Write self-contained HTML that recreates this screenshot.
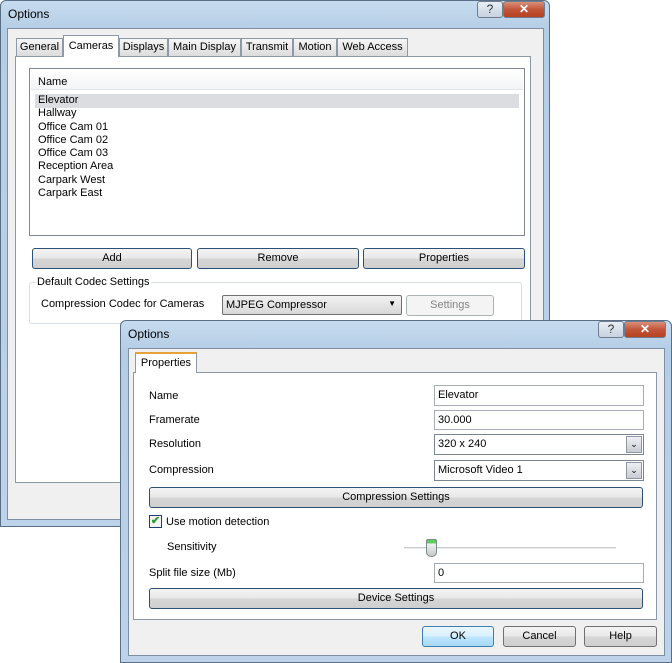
<!DOCTYPE html>
<html><head><meta charset="utf-8"><style>
*{box-sizing:border-box;margin:0;padding:0}
body{width:672px;height:663px;background:#fff;position:relative;overflow:hidden;font-family:"Liberation Sans",sans-serif;font-size:11px;color:#000}
.a{position:absolute}
.win{position:absolute;border:1px solid #5a6f86;border-radius:6px 6px 0 0;background:linear-gradient(180deg,#c6dbee 0,#b4cde6 30px,#bcd3ea 100%)}
.inner{position:absolute;background:#f0f0f0;border:1px solid #7d8fa3}
.title{position:absolute;font-size:12px;color:#000}
.btn{position:absolute;border:1px solid #2c4f75;border-radius:3px;background:linear-gradient(#f4f4f4 0,#e8e8e8 48%,#d6d6d6 52%,#cfcfcf 100%);text-align:center;font-size:11px}
.inp{position:absolute;background:#fff;border:1px solid #a5acb5;padding-left:3px;font-size:11px}
.tab{position:absolute;border:1px solid #8d99a6;border-bottom:none;background:linear-gradient(#f6f6f6,#dcdcdc);text-align:center;font-size:11px;height:18px;line-height:17px}
.cap{position:absolute;width:26px;height:17px;border:1px solid #6d7c8e;border-radius:3px;background:linear-gradient(#e8eef5,#c6d2df);text-align:center;font-size:12px;line-height:15px;color:#333}
.x{background:linear-gradient(#d9907a,#c2553a 50%,#b6421f);color:#fff;width:42px;font-weight:bold}
.dd{position:absolute;right:1px;top:1px;width:16px;bottom:1px;background:linear-gradient(#eef0f3,#c8ccd3);border:1px solid #8d96a3;font-size:9px;text-align:center;line-height:15px}
</style></head><body>
<!-- back window -->
<div class="win" style="left:0;top:0;width:550px;height:527px">
 <div class="title" style="left:7px;top:6px">Options</div>
 <div class="cap" style="left:476px;top:0">?</div>
 <div class="cap x" style="left:502px;top:0">✕</div>
 <div class="inner" style="left:6px;top:27px;width:537px;height:492px"></div>
</div>
<div class="a" style="left:15px;top:56px;width:516px;height:427px;background:#fff;border:1px solid #8d99a6"></div>
<div class="tab" style="left:16px;top:38px;width:47px">General</div>
<div class="tab" style="left:63px;top:35px;width:56px;height:22px;background:#fff;line-height:20px">Cameras</div>
<div class="tab" style="left:119px;top:38px;width:49px">Displays</div>
<div class="tab" style="left:168px;top:38px;width:73px">Main Display</div>
<div class="tab" style="left:241px;top:38px;width:52px">Transmit</div>
<div class="tab" style="left:293px;top:38px;width:44px">Motion</div>
<div class="tab" style="left:337px;top:38px;width:71px">Web Access</div>
<div class="a" style="left:29px;top:68px;width:496px;height:168px;border:1px solid #828790;background:#fff">
 <div class="a" style="left:1px;top:1px;right:1px;height:20px;background:linear-gradient(#fff,#f3f4f6);border-bottom:1px solid #e4e6ea;padding:6px 0 0 7px">Name</div>
 <div class="a" style="left:5px;top:25px;width:484px;height:14px;background:#dcdde1"></div>
 <div class="a" style="left:8px;top:25px;line-height:13.3px">Elevator<br>Hallway<br>Office Cam 01<br>Office Cam 02<br>Office Cam 03<br>Reception Area<br>Carpark West<br>Carpark East</div>
</div>
<div class="btn" style="left:32px;top:248px;width:160px;height:21px;line-height:19px">Add</div>
<div class="btn" style="left:197px;top:248px;width:162px;height:21px;line-height:19px">Remove</div>
<div class="btn" style="left:363px;top:248px;width:162px;height:21px;line-height:19px">Properties</div>
<div class="a" style="left:29px;top:282px;width:493px;height:42px;border:1px solid #d5dfe5;border-radius:3px"></div>
<div class="a" style="left:36px;top:276px;background:#fff;padding:0 1px">Default Codec Settings</div>
<div class="a" style="left:41px;top:298px">Compression Codec for Cameras</div>
<div class="a" style="left:222px;top:295px;width:180px;height:20px;border:1px solid #707070;border-radius:2px;background:linear-gradient(#f2f2f2,#d8d8d8);padding:3px 0 0 3px">MJPEG Compressor<span class="a" style="right:5px;top:3px;font-size:8px">▼</span></div>
<div class="a" style="left:406px;top:295px;width:88px;height:21px;border:1px solid #adb2b5;border-radius:3px;background:#f4f4f4;color:#838383;text-align:center;line-height:19px">Settings</div>

<!-- front window -->
<div class="win" style="left:120px;top:320px;width:552px;height:343px">
 <div class="title" style="left:7px;top:6px">Options</div>
 <div class="cap" style="left:477px;top:0">?</div>
 <div class="cap x" style="left:503px;top:0">✕</div>
 <div class="inner" style="left:7px;top:27px;width:537px;height:308px"></div>
</div>
<div class="a" style="left:133px;top:372px;width:524px;height:248px;background:#fff;border:1px solid #8d99a6"></div>
<div class="tab" style="left:135px;top:352px;width:62px;height:21px;background:#fff;border-top:2px solid #e8a23a;line-height:18px">Properties</div>
<div class="a" style="left:149px;top:390px">Name</div>
<div class="a" style="left:149px;top:414px">Framerate</div>
<div class="a" style="left:149px;top:438px">Resolution</div>
<div class="a" style="left:149px;top:464px">Compression</div>
<div class="inp" style="left:434px;top:385px;width:210px;height:21px;line-height:19px">Elevator</div>
<div class="inp" style="left:434px;top:410px;width:210px;height:20px;line-height:18px">30.000</div>
<div class="inp" style="left:434px;top:434px;width:210px;height:21px;line-height:19px;border-color:#7b8491">320 x 240<div class="dd">&#8964;</div></div>
<div class="inp" style="left:434px;top:460px;width:210px;height:21px;line-height:19px;border-color:#7b8491">Microsoft Video 1<div class="dd">&#8964;</div></div>
<div class="btn" style="left:149px;top:487px;width:494px;height:21px;line-height:19px">Compression Settings</div>
<div class="a" style="left:149px;top:515px;width:13px;height:13px;border:1px solid #1c3f6e;background:#f4f4f4;color:#2aa02a;font-size:11px;line-height:11px;text-align:center;font-weight:bold">✔</div>
<div class="a" style="left:166px;top:516px">Use motion detection</div>
<div class="a" style="left:167px;top:541px">Sensitivity</div>
<div class="a" style="left:404px;top:547px;width:212px;height:2px;background:#c8c8c8;border-bottom:1px solid #eee"></div>
<div class="a" style="left:426px;top:539px;width:11px;height:18px;border:1px solid #7a8a8a;border-radius:2px 2px 5px 5px;background:linear-gradient(#5fcf5f 0,#5fcf5f 3px,#f0f0f0 4px,#c8c8c8)"></div>
<div class="a" style="left:149px;top:567px">Split file size (Mb)</div>
<div class="inp" style="left:434px;top:563px;width:210px;height:20px;line-height:18px">0</div>
<div class="btn" style="left:149px;top:588px;width:494px;height:21px;line-height:19px">Device Settings</div>
<div class="btn" style="left:422px;top:626px;width:72px;height:21px;line-height:19px;border-color:#3c7fb1;background:linear-gradient(#eaf6fd,#d9f0fc 48%,#bee6fd 52%,#a7d9f5)">OK</div>
<div class="btn" style="left:503px;top:626px;width:73px;height:21px;line-height:19px;border-color:#707070">Cancel</div>
<div class="btn" style="left:584px;top:626px;width:73px;height:21px;line-height:19px;border-color:#707070">Help</div>
</body></html>
